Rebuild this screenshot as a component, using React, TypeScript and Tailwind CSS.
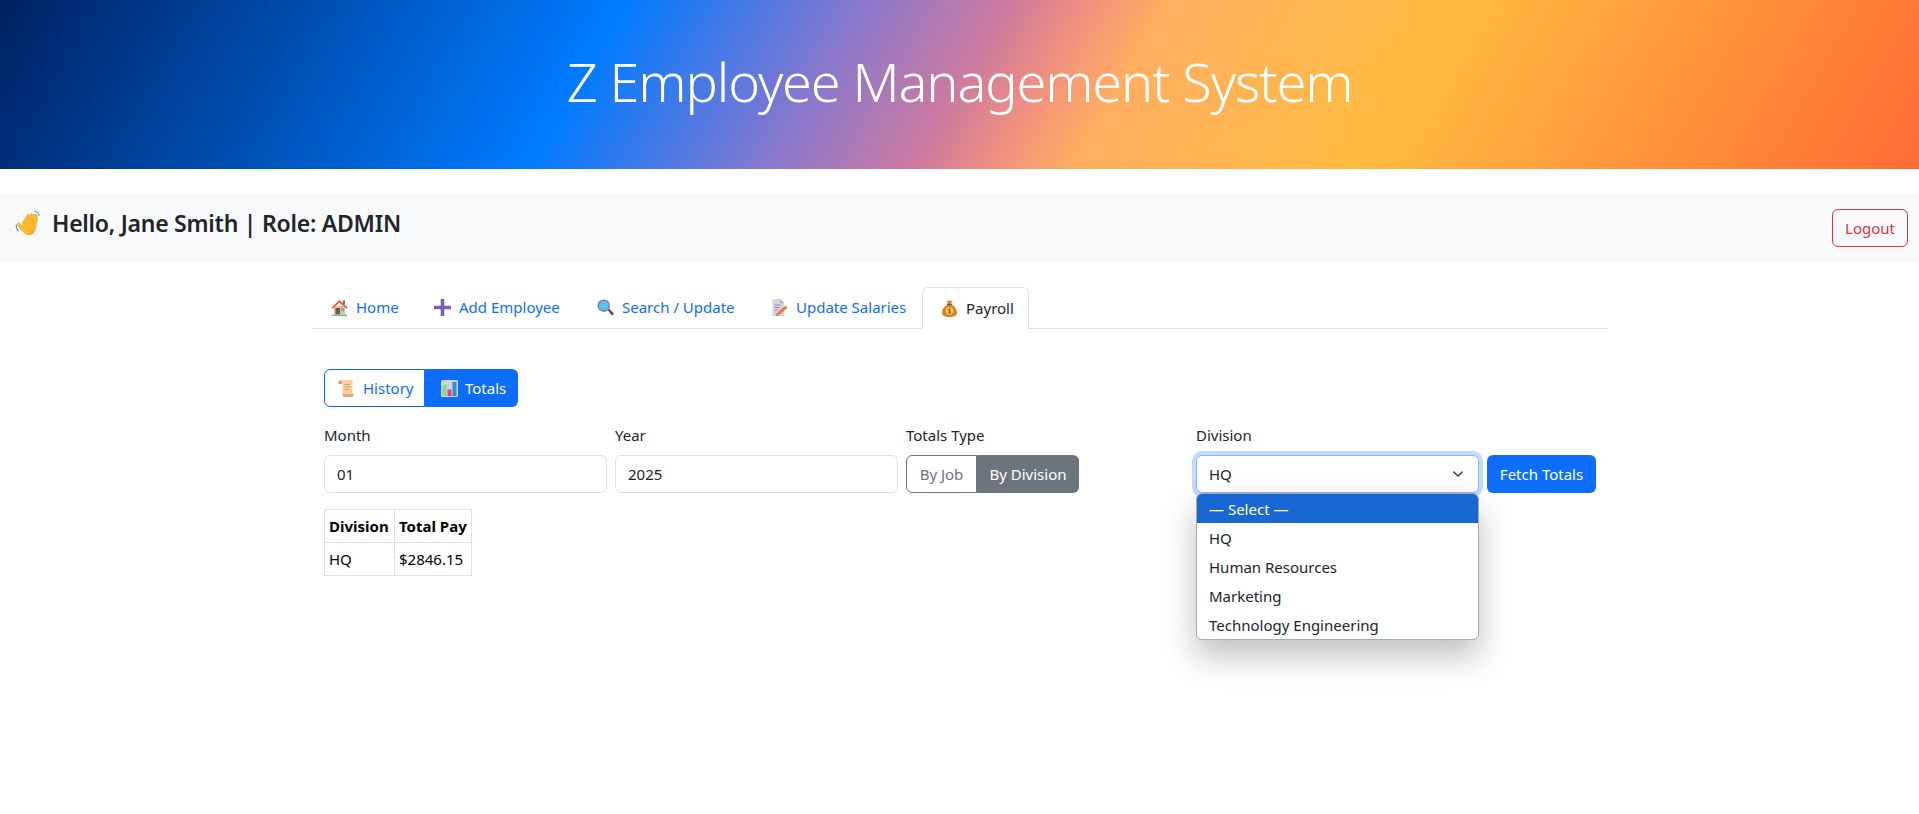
import React from "react";

const Wave = () => (
  <svg width="27" height="27" viewBox="0 0 27 27" className="shrink-0">
    <path d="M1.500 15c-.5 2 .2 4.500 1.700 6M4 14.500c-.3 1.200 0 2.700.9 3.800M20 1.500c1.800.2 3.700 2 4 4M19.500 4.200c1 .1 2 1 2.200 2" fill="none" stroke="#4f93d2" strokeWidth="1.100" strokeLinecap="round" />
    <g fill="#fdb62f">
      <rect x="9.300" y="3.500" width="3.600" height="12" rx="1.800" transform="rotate(32 11 9.500)" />
      <rect x="12.800" y="3" width="3.800" height="13" rx="1.900" transform="rotate(25 14.700 9.500)" />
      <rect x="16" y="4" width="3.800" height="13" rx="1.900" transform="rotate(18 18 10)" />
      <rect x="18.700" y="6.500" width="3.400" height="12" rx="1.700" transform="rotate(12 20.400 12)" />
      <rect x="4" y="12" width="3.500" height="10" rx="1.700" transform="rotate(-35 5.700 17)" />
      <path d="M8 13 20 12c1.500 5 .5 9-2 11.500-3 2.500-7.500 2-10-1.500L6 18Z" />
    </g>
    <path d="M10 24c3 1.500 6.500 1 8.500-1.500 1.500-2 2.300-4.500 2-7-.5 4-2.500 7-5 8-2 .7-4 .8-5.500.5Z" fill="#ef9a1a" />
  </svg>
);
const House = () => (
  <svg width="17" height="17" viewBox="0 0 17 17" className="shrink-0">
    <rect x="12" y="1.500" width="2" height="4" fill="#c9503c" />
    <rect x="3" y="7" width="11" height="8.500" fill="#e9bd92" />
    <rect x="4.500" y="9" width="4.500" height="6.500" fill="#7a5548" />
    <rect x="10.300" y="9" width="2.500" height="3" fill="#4fb3e8" />
    <path d="M.5 8.500 8.500 1l8 7.500-1 1.200-7-6.200-7 6.200Z" fill="#e2553d" />
    <rect x="1" y="15.500" width="15" height="1.500" fill="#4fd08a" />
  </svg>
);
const Plus = () => (
  <svg width="17" height="17" viewBox="0 0 17 17" className="shrink-0">
    <path d="M8.500 1v15M1 8.500h15" stroke="#7b5cb8" strokeWidth="3.600" strokeLinecap="round" />
  </svg>
);
const Glass = () => (
  <svg width="17" height="17" viewBox="0 0 17 17" className="shrink-0">
    <path d="m10.500 11 1.500-1.500 4.500 4.500c.8 1.200-.8 2.800-2 2Z" fill="#6c3f86" />
    <circle cx="6.700" cy="6.700" r="6.200" fill="#7d6f96" />
    <circle cx="6.700" cy="6.700" r="5" fill="#55c2e8" />
  </svg>
);
const Memo = () => (
  <svg width="17" height="17" viewBox="0 0 17 17" className="shrink-0">
    <path d="M1.500 0H9l4 4v13H1.500Z" fill="#d8cfe0" />
    <path d="M9 0l4 4H9Z" fill="#b9a8c8" />
    <path d="M3.500 6h6M3.500 8.500h5M3.500 11h3" stroke="#9a8aa8" strokeWidth="1" />
    <path d="m5.500 14.500 9-8 2 2.300-9 7.700-2.800.7Z" fill="#f4743b" />
  </svg>
);
const Bag = () => (
  <svg width="17" height="17" viewBox="0 0 17 17" className="shrink-0">
    <path d="M5.800 1c1-.8 4.400-.8 5.400 0L10 4.500H7Z" fill="#e58a2e" />
    <path d="M6.300 4.500h4.400c3.300 2 5.300 5 5.300 8 0 3-2.500 4.500-7.500 4.500S1 15.500 1 12.500c0-3 2-6 5.300-8Z" fill="#d9822b" />
    <rect x="6" y="3.700" width="5" height="1.300" rx=".5" fill="#7a4f2b" />
    <circle cx="8.500" cy="11" r="3.800" fill="#f8c74a" />
    <path d="M9.700 9.500C9 9 7.300 9 7.300 10.200s2.400.8 2.400 2-1.700 1.200-2.400.7M8.500 8.500v5" stroke="#7a4f1d" strokeWidth=".8" fill="none" />
  </svg>
);
const Scroll = () => (
  <svg width="17" height="17" viewBox="0 0 17 17" className="shrink-0">
    <path d="M.5 1.500C.5 0 4 0 4 1.500V4H.5Z" fill="#e8965c" />
    <path d="M2.500 0H13c1 0 1.500.7 1.500 1.500V14H4.500V2c0-1-.8-2-2-2Z" fill="#f8cfa0" />
    <path d="M6.500 4.500H12M6.500 7H12M6.500 9.500h4" stroke="#d69a68" strokeWidth="1" />
    <path d="M4.500 14H16c0 2-1 3-2 3H6c-1 0-1.500-1-1.500-3Z" fill="#eaa66f" />
  </svg>
);
const Chart = () => (
  <svg width="17" height="17" viewBox="0 0 17 17" className="shrink-0">
    <rect x="0" y="0" width="17" height="17" rx="1.500" fill="#cfd3da" />
    <rect x="1.500" y="5" width="4" height="11" fill="#7fdc8f" />
    <rect x="6.500" y="9.500" width="4" height="6.500" fill="#ec3f7c" />
    <rect x="11.500" y="2" width="4" height="14" fill="#2b8fd8" />
  </svg>
);

const tabBase = "flex items-center gap-2 h-[42px] pl-[18px] border";

export default function App() {
  return (
    <div className="min-h-[814px] bg-white text-[#212529] text-[15px] font-['Noto_Sans','Open_Sans',sans-serif]">
      <header className="h-[169px] pb-[6px] flex items-center justify-center bg-[linear-gradient(120deg,#002060_0%,#007bff_31%,#8a78cc_43%,#cc7aa0_50%,#f09080_54%,#ffae60_58%,#ffbc42_72%,#ff6b35_100%)]">
        <h1 className="text-[54px] font-light text-white tracking-[-1.1px]">Z Employee Management System</h1>
      </header>
      <div className="mt-6 h-[70px] bg-[#f8f9fa] flex items-center justify-between pl-[15px] pr-[11px]">
        <div className="flex items-center gap-[10px] pb-[10px] text-[23px] font-semibold tracking-[-0.25px] leading-[32px] text-[#212529]">
          <Wave />
          <span>Hello, Jane Smith | Role: ADMIN</span>
        </div>
        <div className="h-[38px] w-[76px] justify-center flex items-center border border-[#dc3545] rounded-[6px] text-[#dc3545]">Logout</div>
      </div>
      <main className="w-[1296px] ml-[312px] mt-6">
        <nav className="flex items-end h-[42px] border-b border-[#dee2e6]">
          <div className={`${tabBase} w-[103px] border-transparent text-[#0d6efd]`}><House /><span>Home</span></div>
          <div className={`${tabBase} w-[163px] border-transparent text-[#0d6efd]`}><Plus /><span>Add Employee</span></div>
          <div className={`${tabBase} w-[174px] border-transparent text-[#0d6efd]`}><Glass /><span>Search / Update</span></div>
          <div className={`${tabBase} w-[170px] border-transparent text-[#0d6efd]`}><Memo /><span>Update Salaries</span></div>
          <div className={`${tabBase} w-[107px] -mb-px border-[#dee2e6] border-b-white rounded-t-[6px] bg-white text-[#212529]`}><Bag /><span>Payroll</span></div>
        </nav>
        <div className="px-3 pt-10">
          <div className="flex h-[38px] w-fit">
            <div className="w-[101px] flex items-center gap-2 pl-[13px] border border-[#0d6efd] rounded-l-[6px] text-[#0d6efd]"><Scroll />History</div>
            <div className="w-[93px] flex items-center gap-[7px] pl-[16px] bg-[#0d6efd] rounded-r-[6px] text-white"><Chart />Totals</div>
          </div>
          <div className="flex gap-2 mt-4">
            <div className="w-[283px] shrink-0">
              <div className="h-[24px] mb-2 pt-px">Month</div>
              <div className="h-[38px] px-3 flex items-center border border-[#dee2e6] rounded-[6px] bg-white">01</div>
            </div>
            <div className="w-[283px] shrink-0">
              <div className="h-[24px] mb-2 pt-px">Year</div>
              <div className="h-[38px] px-3 flex items-center border border-[#dee2e6] rounded-[6px] bg-white">2025</div>
            </div>
            <div className="w-[282px] shrink-0">
              <div className="h-[24px] mb-2 pt-px">Totals Type</div>
              <div className="flex h-[38px] w-fit">
                <div className="w-[71px] justify-center flex items-center border border-[#6c757d] rounded-l-[6px] text-[#6c757d]">By Job</div>
                <div className="w-[102px] justify-center flex items-center bg-[#6c757d] rounded-r-[6px] text-white">By Division</div>
              </div>
            </div>
            <div className="relative w-[283px] shrink-0">
              <div className="h-[24px] mb-2 pt-px">Division</div>
              <div className="h-[38px] px-3 flex items-center justify-between border border-[#86b7fe] rounded-[6px] bg-white shadow-[0_0_0_4px_rgba(13,110,253,0.25)]">
                <span>HQ</span>
                <svg width="16" height="16" viewBox="0 0 16 16" fill="none" stroke="#343a40" strokeWidth="2" strokeLinecap="round" strokeLinejoin="round"><path d="m2 5 6 6 6-6" transform="translate(2.400 2.400) scale(.7)" /></svg>
              </div>
              <div className="absolute left-0 top-[70px] w-[283px] h-[147px] overflow-hidden rounded-[6px] border border-[#a9a9a9] bg-white shadow-[0_16px_32px_rgba(0,0,0,0.25)]">
                <div className="h-[29px] pt-px flex items-center pl-[12px] bg-[#1967d2] text-white">— Select —</div>
                <div className="h-[29px] pt-px flex items-center pl-[12px]">HQ</div>
                <div className="h-[29px] pt-px flex items-center pl-[12px]">Human Resources</div>
                <div className="h-[29px] pt-px flex items-center pl-[12px]">Marketing</div>
                <div className="h-[29px] pt-px flex items-center pl-[12px]">Technology Engineering</div>
              </div>
            </div>
            <div className="self-end h-[38px] w-[109px] justify-center flex items-center rounded-[6px] bg-[#0d6efd] text-white">Fetch Totals</div>
          </div>
          <table className="mt-4 border-collapse text-black">
            <thead>
              <tr>
                <th className="w-[70px] whitespace-nowrap border border-[#dee2e6] h-[33px] px-1 text-left font-bold">Division</th>
                <th className="w-[77px] whitespace-nowrap border border-[#dee2e6] h-[33px] pl-1 pr-0 text-left font-bold">Total Pay</th>
              </tr>
            </thead>
            <tbody>
              <tr>
                <td className="border border-[#dee2e6] h-[33px] px-1">HQ</td>
                <td className="border border-[#dee2e6] h-[33px] pl-1 pr-0">$2846.15</td>
              </tr>
            </tbody>
          </table>
        </div>
      </main>
    </div>
  );
}
